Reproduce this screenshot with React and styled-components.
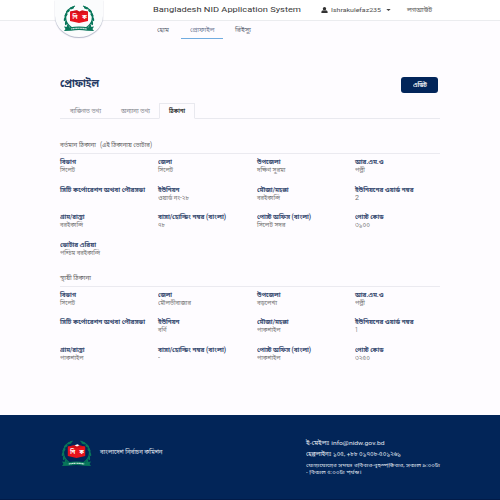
import React, { useLayoutEffect, useRef } from "react";
import styled, { createGlobalStyle } from "styled-components";

const sans = `Roboto, "Noto Sans", "Noto Sans Bengali", "Liberation Sans", sans-serif`;

const GlobalStyle = createGlobalStyle`
  * { box-sizing: border-box; }
  body { margin: 0; background: #fefcff; font-family: ${sans}; color: #555; overflow: hidden; }
  h1, h2, p, dl, dt, dd { margin: 0; font-weight: normal; }
`;

const FitBox = styled.span`
  display: block;
  flex: none;
  width: ${(p) => p.$w}px;
  white-space: pre;
`;
const FitInner = styled.span`
  display: inline-block;
  vertical-align: top;
  transform-origin: 0 50%;
`;

/* Sets a line of text to a fixed measure by condensing or widening its glyphs. */
function Fit({ w, children }) {
  const ref = useRef(null);
  useLayoutEffect(() => {
    const el = ref.current;
    if (el.offsetWidth) {
      el.style.transform = "none";
      el.style.transform = `scaleX(${w / el.getBoundingClientRect().width})`;
    }
  }, [w, children]);
  return <FitBox $w={w}><FitInner ref={ref}>{children}</FitInner></FitBox>;
}

const Page = styled.div`
  width: 500px;
  height: 500px;
  display: flex;
  flex-direction: column;
  position: relative;
`;
const TopBar = styled.header`
  height: 21px;
  flex: none;
  display: flex;
  align-items: center;
  padding-left: 153px;
  background: #fff;
  border-bottom: 1px solid #ebecef;
`;
const Brand = styled.div`
  font-size: 8px;
  line-height: 12px;
  color: #383838;
  margin-right: 20px;
`;
const UserMenu = styled.div`
  display: flex;
  align-items: center;
  font-size: 6.2px;
  line-height: 10px;
  color: #4d4d4d;
  gap: 3px;
  margin-right: 16px;
  svg { flex: none; display: block; }
  svg:last-child { margin-left: 2px; }
`;
const Logout = styled.div`
  font-size: 6.6px;
  line-height: 10px;
  color: #555;
`;
const Badge = styled.div`
  position: absolute;
  left: 55px;
  top: 0;
  width: 48px;
  height: 37px;
  background: #fbfcfd;
  border-radius: 0 0 24px 24px / 0 0 21px 21px;
  box-shadow: 0 1px 1px #b4b8c9, 0 0 1px #d0d2da;
  display: flex;
  justify-content: center;
  padding-top: 5px;
`;
const Nav = styled.nav`
  height: 18px;
  flex: none;
  display: flex;
  padding-left: 145px;
`;
const NavItem = styled.div`
  width: ${(p) => p.$width}px;
  display: flex;
  justify-content: center;
  font-size: 6.8px;
  line-height: 19px;
  color: ${(p) => (p.$active ? "#748098" : "#626875")};
  border-bottom: 1px solid ${(p) => (p.$active ? "#71ace0" : "transparent")};
`;
const Main = styled.main`
  flex: none;
  height: 376px;
  padding: 36px 60px 0;
`;
const TitleRow = styled.div`
  display: flex;
  justify-content: space-between;
  align-items: center;
  height: 19px;
`;
const Title = styled.h1`
  font-size: 11.2px;
  line-height: 14px;
  font-weight: 700;
  color: #263b64;
  padding-bottom: 2px;
`;
const EditButton = styled.button`
  width: 37px;
  height: 16px;
  margin: 0 2px 0 0;
  padding: 0;
  border: 0;
  border-radius: 3px;
  background: #02255a;
  color: #e4e8ef;
  font: 700 6.6px/16px ${sans};
  display: flex;
  justify-content: center;
`;
const Tabs = styled.div`
  display: flex;
  height: 16px;
  margin-top: 9px;
  border-bottom: 1px solid #e9e9ef;
`;
const Tab = styled.div`
  flex: none;
  width: ${(p) => p.$width}px;
  padding-left: 9px;
  height: 16px;
  font-size: 6.6px;
  line-height: 14px;
  color: #7d8189;
  border: 1px solid transparent;
  ${(p) => p.$active && `
    color: #3c3c3c;
    font-weight: 700;
    border-color: #e9e9ef;
    border-bottom-color: #fefcff;
    border-radius: 1px 1px 0 0;
  `}
`;
const Section = styled.section`
  margin-top: ${(p) => p.$top}px;
`;
const SectionTitle = styled.h2`
  display: flex;
  gap: 4px;
  height: 15px;
  font-size: 6.6px;
  line-height: 12px;
  color: #626262;
  border-bottom: 1px solid #ebeaf0;
`;
const Fields = styled.dl`
  display: grid;
  grid-template-columns: 98px 98.5px 98.5px 85px;
  grid-auto-rows: 27.7px;
  padding-top: 4px;
`;
const Field = styled.div``;
const Label = styled.dt`
  height: 8px;
  font-size: 6.9px;
  line-height: 8px;
  font-weight: 700;
  color: #384b71;
`;
const Value = styled.dd`
  height: 8px;
  font-size: 6.7px;
  line-height: 8px;
  color: #747474;
`;
const Footer = styled.footer`
  flex: none;
  height: 85px;
  display: flex;
  background: #022558;
  border-bottom: 1px solid #011b48;
  color: #e0e6ef;
  padding: 25px 0 0 61px;
`;
const Organisation = styled.div`
  display: flex;
  gap: 8px;
  width: 245px;
  font-size: 6.6px;
  line-height: 24px;
`;
const Contacts = styled.div`
  font-size: 6.2px;
  line-height: 7px;
`;
const Contact = styled.p`
  margin-bottom: 4px;
`;
const Hours = styled.p`
  font-size: 5.4px;
  line-height: 6.5px;
`;

function Emblem({ width, height }) {
  const leaves = [[5, 22, -12], [3, 18, 5], [2, 14, 18], [3, 10, 38], [5, 6, 53], [9, 3, 68]];
  return (
    <svg width={width} height={height} viewBox="0 0 32 27" preserveAspectRatio="none">
      {[false, true].map((flip) => (
        <g key={String(flip)} transform={flip ? "translate(32 0) scale(-1 1)" : undefined} fill="#08765a">
          <path d="M12 1Q2 4 2.5 13Q3 19 9 23" fill="none" stroke="#08765a" strokeWidth="1.3" />
          {leaves.map(([x, y, a]) => (
            <ellipse key={y} cx={x} cy={y} rx="1.1" ry="2.2" transform={`rotate(${a} ${x} ${y})`} />
          ))}
        </g>
      ))}
      <path d="M7 6.5L16 5L25 6.5V16L16 18L7 16Z" fill="#e7131d" />
      <path d="M7 6.5L16 5L25 6.5L16 8.5Z" fill="#cf0f18" />
      <path d="M14 5.2L17 4.2L19 5.2L16.5 6.5Z" fill="#fff" />
      <text x="12" y="14" fontSize="5.6" fontWeight="700" fill="#fff" textAnchor="middle">নি</text>
      <text x="21.5" y="14" fontSize="5.6" fontWeight="700" fill="#fff" textAnchor="middle">ক</text>
      <path d="M1 21.5L7 22.3Q16 20.5 25 22.3L31 21.5L29.5 24L31 26L24 25.8Q16 24.2 8 25.8L1 26L2.5 24Z" fill="#08765a" />
      <path d="M8 24Q16 22.5 24 24" fill="none" stroke="#c9e5dc" strokeWidth="1.2" strokeDasharray="1.4 .3" />
    </svg>
  );
}

const present = [
  ["বিভাগ", 16, "সিলেট", 15], ["জেলা", 14, "সিলেট", 15], ["উপজেলা", 23.5, "দক্ষিণ সুরমা", 28.5], ["আর.এম.ও", 28.5, "পল্লী", 10],
  ["সিটি কর্পোরেশন অথবা পৌরসভা", 85, "", 0], ["ইউনিয়ন", 21.5, "ওয়ার্ড নং-২৮", 31], ["মৌজা/মহল্লা", 31.5, "বরইকান্দি", 23], ["ইউনিয়নের ওয়ার্ড নম্বর", 58.5, "2", 4],
  ["গ্রাম/রাস্তা", 24.5, "বরইকান্দি", 23], ["বাসা/হোল্ডিং নম্বর (বাংলা)", 68, "৭৮", 7], ["পোস্ট অফিস (বাংলা)", 54, "সিলেট সদর", 28.5], ["পোস্ট কোড", 28.5, "৩১০০", 15],
  ["ভোটার এরিয়া", 36, "পশ্চিম বরইকান্দি", 40],
];
const permanent = [
  ["বিভাগ", 16, "সিলেট", 15], ["জেলা", 14, "মৌলভীবাজার", 33], ["উপজেলা", 23.5, "বড়লেখা", 20], ["আর.এম.ও", 28.5, "পল্লী", 10],
  ["সিটি কর্পোরেশন অথবা পৌরসভা", 85, "", 0], ["ইউনিয়ন", 21.5, "বর্ণি", 8.5], ["মৌজা/মহল্লা", 31.5, "পাকশাইল", 23.5], ["ইউনিয়নের ওয়ার্ড নম্বর", 58.5, "1", 3],
  ["গ্রাম/রাস্তা", 24.5, "পাকশাইল", 23.5], ["বাসা/হোল্ডিং নম্বর (বাংলা)", 68, "-", 2], ["পোস্ট অফিস (বাংলা)", 54, "পাকশাইল", 23.5], ["পোস্ট কোড", 28.5, "৩২৫০", 15],
];

function AddressFields({ items }) {
  return (
    <Fields>
      {items.map(([label, lw, value, vw], i) => (
        <Field key={i}>
          <Label><Fit w={lw}>{label}</Fit></Label>
          <Value>{value && <Fit w={vw}>{value}</Fit>}</Value>
        </Field>
      ))}
    </Fields>
  );
}

export default function App() {
  return (
    <Page>
      <GlobalStyle />
      <TopBar>
        <Brand><Fit w={148}>Bangladesh NID Application System</Fit></Brand>
        <UserMenu>
          <svg width="7" height="6" viewBox="0 0 7 6" fill="#333"><ellipse cx="3.5" cy="1.7" rx="1.7" ry="1.7" /><path d="M.4 6V4.8Q.5 3.6 2.2 3.2Q3.5 4 4.8 3.2Q6.5 3.6 6.6 4.8V6Z" /></svg>
          <Fit w={50}>Ishrakulefaz235</Fit>
          <svg width="5" height="2" viewBox="0 0 5 2" fill="#444"><path d="M.3 0H4.7L2.5 2Z" /></svg>
        </UserMenu>
        <Logout><Fit w={25}>লগআউট</Fit></Logout>
      </TopBar>
      <Badge><Emblem width="32" height="27" /></Badge>
      <Nav>
        <NavItem $width={36}><Fit w={12}>হোম</Fit></NavItem>
        <NavItem $width={42} $active><Fit w={24.5}>প্রোফাইল</Fit></NavItem>
        <NavItem $width={40}><Fit w={16}>রিইস্যু</Fit></NavItem>
      </Nav>
      <Main>
        <TitleRow>
          <Title><Fit w={39}>প্রোফাইল</Fit></Title>
          <EditButton><Fit w={14}>এডিট</Fit></EditButton>
        </TitleRow>
        <Tabs>
          <Tab $width={51}><Fit w={31}>ব্যক্তিগত তথ্য</Fit></Tab>
          <Tab $width={48}><Fit w={29}>অন্যান্য তথ্য</Fit></Tab>
          <Tab $width={36} $active><Fit w={16}>ঠিকানা</Fit></Tab>
        </Tabs>
        <Section $top={20}>
          <SectionTitle><Fit w={36}>বর্তমান ঠিকানা</Fit><Fit w={52}>(এই ঠিকানায় ভোটার)</Fit></SectionTitle>
          <AddressFields items={present} />
        </Section>
        <Section $top={3}>
          <SectionTitle><Fit w={31}>স্থায়ী ঠিকানা</Fit></SectionTitle>
          <AddressFields items={permanent} />
        </Section>
      </Main>
      <Footer>
        <Organisation>
          <Emblem width="31" height="27" />
          <Fit w={62.5}>বাংলাদেশ নির্বাচন কমিশন</Fit>
        </Organisation>
        <Contacts>
          <Contact><Fit w={78.5}>ই-মেইলঃ info@nidw.gov.bd</Fit></Contact>
          <Contact><Fit w={95}>হেল্পলাইনঃ ১০৫, +৮৮ ০১৭০৮-৫০১২৬১</Fit></Contact>
          <Hours>
            <Fit w={134}>যোগাযোগের সময়ঃ রবিবার-বৃহস্পতিবার, সকাল ৯:০০টা</Fit>
            <Fit w={55.5}>- বিকাল ৫:০০টা পর্যন্ত।</Fit>
          </Hours>
        </Contacts>
      </Footer>
    </Page>
  );
}
